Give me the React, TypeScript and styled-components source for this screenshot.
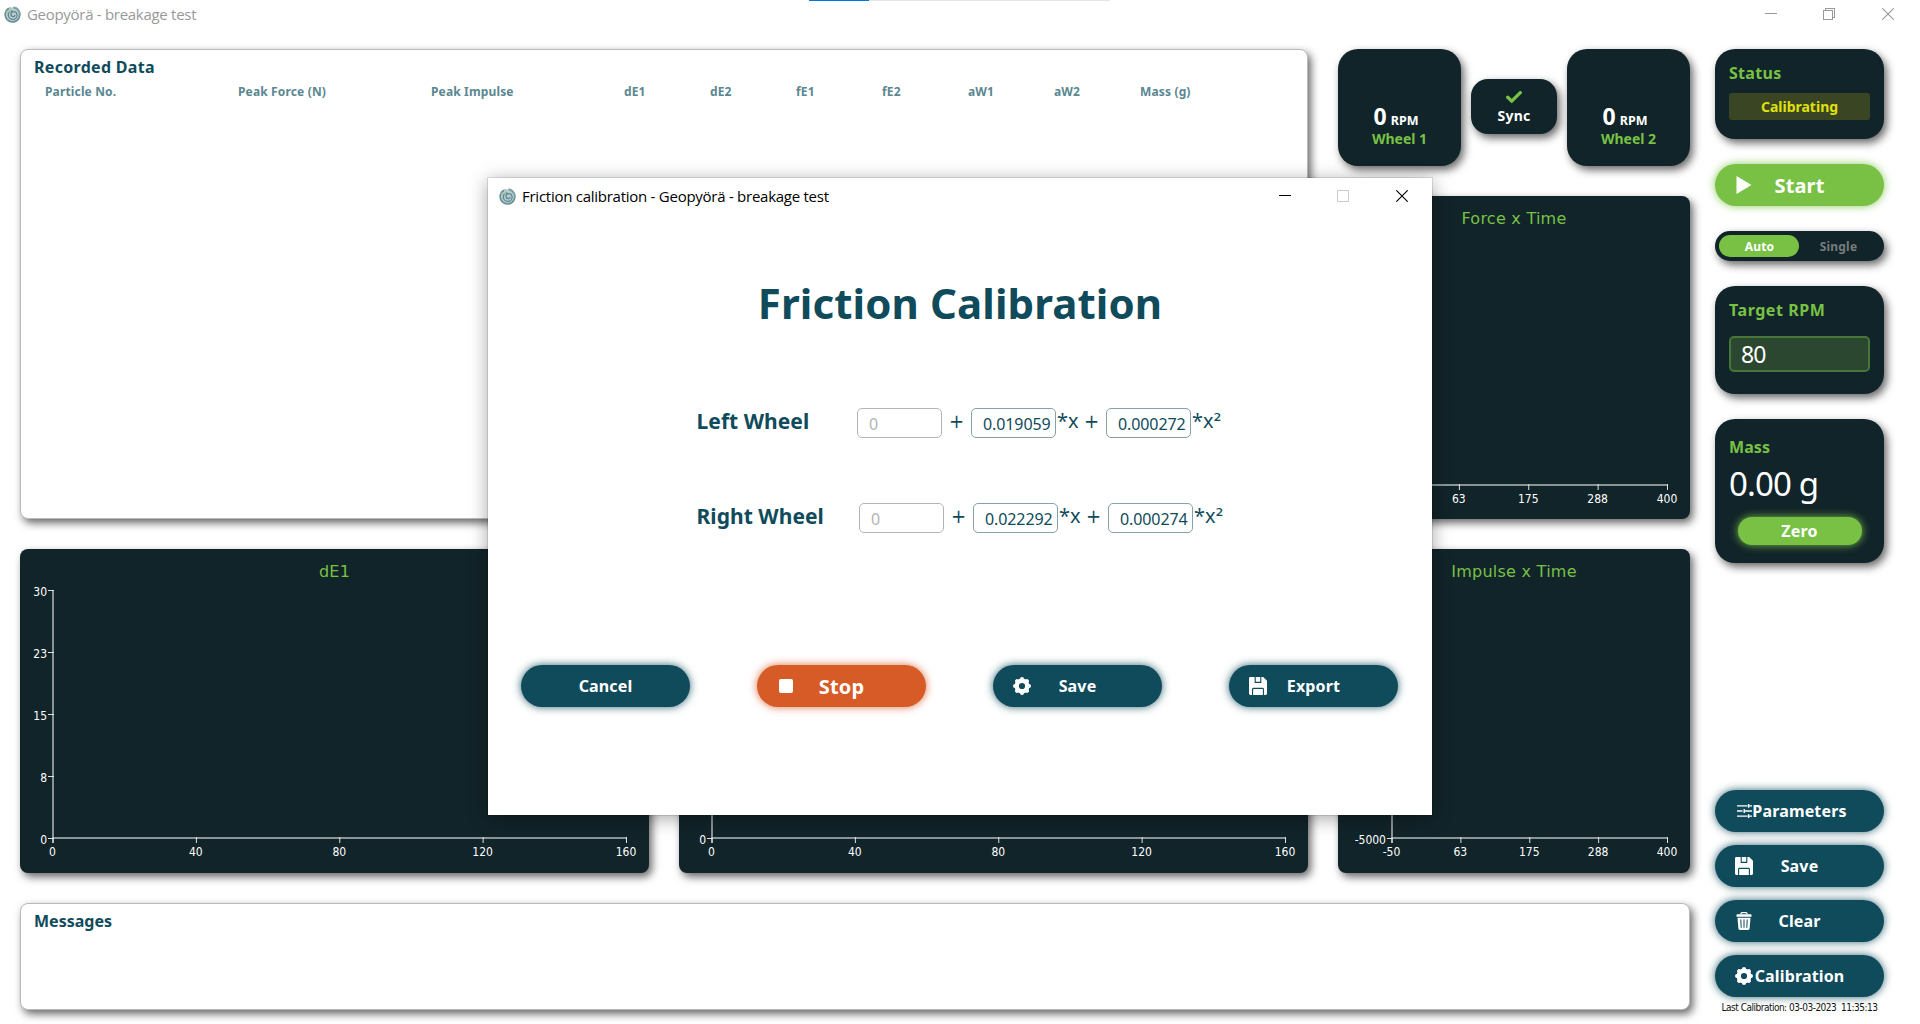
import React from "react";
import styled, { createGlobalStyle, css } from "styled-components";

const c = {
  dark: "#112429",
  teal: "#104b5b",
  green: "#78c144",
  orange: "#d65b26",
  axis: "#8b9396",
};

const uiFont = `"Noto Sans", "Open Sans", sans-serif`;
const titleFont = `"Open Sans", "Noto Sans", sans-serif`;
const chartFont = `"DejaVu Sans Condensed", "DejaVu Sans", sans-serif`;

const GlobalStyle = createGlobalStyle`
  *, *::before, *::after { box-sizing: border-box; }
  body { margin: 0; background: #fff; font-family: ${uiFont}; overflow: hidden; }
  button { font: inherit; border: 0; padding: 0; margin: 0; }
  svg { display: block; }
`;

/* ---------- window frame ---------- */

const Window = styled.div`
  position: relative;
  width: 1920px;
  height: 1024px;
  display: flex;
  flex-direction: column;
  background: #fff;
`;

const Progress = styled.div`
  position: absolute;
  top: 0;
  left: 809px;
  width: 301px;
  height: 1px;
  background: linear-gradient(to right, #0078d7 60px, #e5e5e5 60px);
`;

const TitleBar = styled.header<{ $dialog?: boolean }>`
  flex: none;
  display: flex;
  align-items: center;
  height: ${(p) => (p.$dialog ? 36 : 28)}px;
  padding: ${(p) => (p.$dialog ? "0 24px 0 11px" : "0 26px 0 4px")};
  color: ${(p) => (p.$dialog ? "#000" : "#999")};
  font-family: ${titleFont};
  font-size: 15px;
  line-height: 20px;
  letter-spacing: ${(p) => (p.$dialog ? -0.26 : -0.29)}px;
`;

const TitleText = styled.span`
  flex: 1;
  margin-left: 6px;
  padding-bottom: 1px;
`;

const Controls = styled.div`
  display: flex;
  gap: 46px;
`;

/* ---------- main layout ---------- */

const Body = styled.main`
  display: flex;
  gap: 25px;
  padding: 21px 36px 0 20px;
`;

const Workspace = styled.div`
  width: 1670px;
  display: flex;
  flex-direction: column;
  gap: 30px;
`;

const TopRow = styled.div`
  display: grid;
  grid-template-columns: 1288px 352px;
  column-gap: 30px;
  height: 470px;
`;

const RightStack = styled.div`
  display: flex;
  flex-direction: column;
  gap: 30px;
`;

const ChartRow = styled.div`
  display: grid;
  grid-template-columns: 629px 629px 352px;
  column-gap: 30px;
  height: 324px;
`;

const softShadow = css`
  box-shadow: 3px 4px 9px rgba(0, 0, 0, 0.6);
`;

const LightPanel = styled.section<{ $height: number }>`
  height: ${(p) => p.$height}px;
  padding: 7px 13px;
  border: 1px solid #b9bbbb;
  border-radius: 8px;
  background: #fff;
  ${softShadow}
`;

const PanelTitle = styled.h2<{ $spacing?: number }>`
  margin: 0;
  color: ${c.teal};
  font-size: 16px;
  line-height: 20px;
  letter-spacing: ${(p) => p.$spacing ?? 0}px;
`;

const HeaderRow = styled.div`
  display: grid;
  grid-template-columns: repeat(3, 193px) repeat(6, 86px) 1fr;
  margin-top: 7px;
  padding-left: 11px;
  color: #5a8790;
  font-size: 12px;
  font-weight: 700;
  line-height: 16px;
  letter-spacing: 0.15px;
`;

/* ---------- wheels ---------- */

const Wheels = styled.div`
  display: flex;
  gap: 10px;
  align-items: flex-start;
`;

const WheelCard = styled.div`
  width: 123px;
  height: 117px;
  padding-top: 53px;
  border-radius: 20px;
  background: ${c.dark};
  text-align: center;
  ${softShadow}
`;

const WheelReading = styled.div`
  display: flex;
  align-items: baseline;
  justify-content: center;
  gap: 4px;
  height: 27px;
  padding-right: 7px;
  color: #fff;
  font-size: 23px;
  font-weight: 700;
  line-height: 28px;
`;

const Unit = styled.span`
  font-size: 12.5px;
  line-height: 14px;
`;

const WheelName = styled.div`
  color: ${c.green};
  font-size: 14px;
  font-weight: 700;
  line-height: 20px;
`;

const SyncCard = styled.div`
  display: flex;
  flex-direction: column;
  align-items: center;
  width: 86px;
  height: 55px;
  margin-top: 30px;
  padding-top: 12px;
  border-radius: 17px;
  background: ${c.dark};
  color: #fff;
  font-size: 14px;
  font-weight: 700;
  line-height: 20px;
  letter-spacing: 0.3px;
  ${softShadow}
`;

const SyncLabel = styled.span`
  margin-top: 3px;
`;

/* ---------- charts ---------- */

const ChartCard = styled.section`
  display: flex;
  flex-direction: column;
  flex: 1;
  padding-top: 13px;
  border-radius: 8px;
  background: ${c.dark};
  ${softShadow}
`;

const ChartTitle = styled.h3`
  height: 19px;
  margin: 0;
  color: ${c.green};
  font-family: "DejaVu Sans", sans-serif;
  font-size: 16px;
  font-weight: 400;
  line-height: 20px;
  letter-spacing: 0.25px;
  text-align: center;
`;

const Plot = styled.svg`
  flex: 1;
  width: 100%;
  overflow: visible;
  font-family: ${chartFont};
  font-size: 12px;
  fill: #fff;
`;

/* ---------- side bar ---------- */

const Side = styled.aside`
  width: 169px;
  display: flex;
  flex-direction: column;
  gap: 25px;
`;

const SideCard = styled.section<{ $height: number; $top: number }>`
  display: flex;
  flex-direction: column;
  height: ${(p) => p.$height}px;
  padding: ${(p) => p.$top}px 14px 0;
  border-radius: 20px;
  background: ${c.dark};
  ${softShadow}
`;

const CardTitle = styled.h2<{ $spacing?: number }>`
  margin: 0;
  color: ${c.green};
  font-size: 16px;
  line-height: 20px;
  letter-spacing: ${(p) => p.$spacing ?? 0.1}px;
`;

const StatusBadge = styled.div`
  margin-top: 10px;
  border-radius: 3px;
  background: #3a4523;
  color: #e0e00c;
  font-size: 14px;
  font-weight: 700;
  line-height: 27px;
  text-align: center;
`;

const Toggle = styled.div`
  display: flex;
  height: 30px;
  padding: 4px;
  border-radius: 15px;
  background: ${c.dark};
  ${softShadow}
`;

const ToggleOption = styled.button<{ $on?: boolean }>`
  flex: 1;
  padding: ${(p) => (p.$on ? "1px 0 0 1px" : "1px 2px 0 0")};
  border-radius: 11px;
  background: ${(p) => (p.$on ? c.green : "transparent")};
  color: ${(p) => (p.$on ? "#fff" : "#777c7e")};
  font-size: 12px;
  font-weight: 700;
  line-height: 21px;
  letter-spacing: 0.2px;
`;

const TargetField = styled.div`
  height: 36px;
  margin-top: 16px;
  padding-left: 10px;
  border: 2px solid #47763a;
  border-radius: 5px;
  background: #2b472f;
  color: #fff;
  font-size: 23px;
  line-height: 33px;
  letter-spacing: -1px;
`;

const MassValue = styled.div`
  margin-top: 7px;
  color: #fff;
  font-size: 33px;
  line-height: 40px;
  letter-spacing: -0.85px;
  white-space: nowrap;
`;

const ZeroButton = styled.button`
  align-self: center;
  width: 124px;
  height: 28px;
  margin-top: 13px;
  border-radius: 14px;
  background: ${c.green};
  box-shadow: 0 0 9px ${c.green};
  color: #fff;
  font-size: 16px;
  font-weight: 700;
  line-height: 28px;
  letter-spacing: 0.2px;
`;

const PillRoot = styled.button<{ $color: string; $size?: number }>`
  display: grid;
  flex: none;
  align-items: center;
  justify-items: center;
  width: 169px;
  height: 42px;
  border-radius: 21px;
  background: ${(p) => p.$color};
  box-shadow: 0 0 8px ${(p) => p.$color}d9;
  color: #fff;
  font-size: ${(p) => p.$size ?? 16}px;
  font-weight: 700;
  line-height: 24px;
  letter-spacing: 0.15px;
  & > * { grid-area: 1 / 1; }
`;

const PillLabel = styled.span<{ $drop: number }>`
  padding-top: ${(p) => p.$drop}px;
`;

const PillIcon = styled.span`
  display: grid;
  place-items: center;
  justify-self: start;
  width: 18px;
  height: 18px;
  margin-left: 20px;
`;

const Actions = styled.div`
  display: flex;
  flex-direction: column;
  gap: 13px;
  margin-top: 202px;
`;

const LastCalibration = styled.div`
  margin-top: -10px;
  height: 16px;
  color: #111;
  font-family: ${chartFont};
  font-size: 10px;
  line-height: 16px;
  letter-spacing: -0.5px;
  text-align: center;
  white-space: pre;
`;

/* ---------- calibration dialog ---------- */

const Dialog = styled.section`
  position: absolute;
  left: 488px;
  top: 178px;
  width: 944px;
  height: 637px;
  display: flex;
  flex-direction: column;
  background: #fff;
  box-shadow: 0 0 0 1px rgba(0, 0, 0, 0.1), 0 3px 18px rgba(0, 0, 0, 0.36);
`;

const DialogTitle = styled.h1`
  margin: 61px 0 77px;
  color: ${c.teal};
  font-size: 42px;
  line-height: 56px;
  letter-spacing: 0.1px;
  text-align: center;
`;

const Equations = styled.div`
  display: flex;
  flex-direction: column;
  gap: 65px;
  padding-left: 208.5px;
`;

const EquationRow = styled.div<{ $label: number }>`
  display: grid;
  grid-template-columns: ${(p) => p.$label}px 85px 29px 85px 50px 85px auto;
  height: 30px;
  color: ${c.teal};
  font-size: 20px;
  line-height: 26px;
`;

const WheelLabel = styled.label`
  font-size: 21px;
  font-weight: 700;
  line-height: 27px;
  letter-spacing: 0.05px;
`;

const Coefficient = styled.div<{ $muted?: boolean }>`
  height: 30px;
  padding: 1px 0 0 11px;
  border: 1px solid ${(p) => (p.$muted ? "#b4b4b4" : "#86a3ab")};
  border-radius: 5px;
  color: ${(p) => (p.$muted ? "#b4b4b4" : c.teal)};
  font-size: 16px;
  line-height: 28px;
  letter-spacing: -0.1px;
`;

const Operator = styled.span`
  font-family: ${chartFont};
  text-align: center;
`;

const Term = styled.span`
  display: flex;
  justify-content: space-between;
  padding: 0 7px 0 1px;
`;

const Power = styled.span`
  font-family: "DejaVu Sans", sans-serif;
  line-height: 1;
`;

const DialogActions = styled.div`
  display: flex;
  gap: 67px;
  margin-top: 132px;
  padding-left: 33px;
`;

/* ---------- icons ---------- */

const Logo = () => (
  <svg width="17" height="17" viewBox="0 0 17 17" fill="none">
    <circle cx="8.7" cy="8.8" r="7.4" fill="#b9cdd0" />
    <path d="M5 2.2A7.3 7.3 0 1 0 9.5 1.4" stroke="#6b919b" strokeWidth="1.7" />
    <path d="M9.5 1.2a7.5 7.5 0 0 1 6.6 7.4" stroke="#88a6a9" strokeWidth="1.2" />
    <path d="M8.4 4.6a4.4 4.4 0 1 0 4.7 4.6c0-2.5-1.5-3.6-3.3-3.6-1.7 0-2.8 1.2-2.8 2.7s1 2.4 2.2 2.4 1.900-.8 1.900-1.700" stroke="#5d8792" strokeWidth="1.25" />
    <path d="M5.400 1.300l1.900 1.200M2.300 5.200l1.700 1.500M5.500 5.800l1.400-1.500" stroke="#a5c98e" strokeWidth="1.500" />
  </svg>
);

const Minimize = () => (
  <svg width="12" height="12" fill="none" stroke="currentColor" shapeRendering="crispEdges">
    <path d="M0 5.500H12" />
  </svg>
);

const Restore = () => (
  <svg width="13" height="12" fill="none" stroke="currentColor" shapeRendering="crispEdges">
    <path d="M.5 2.500h9v9h-9zM2.500 2.500v-2h9v9h-2" />
  </svg>
);

const Maximize = () => (
  <svg width="13" height="12" fill="none" stroke="#ccc" shapeRendering="crispEdges">
    <path d="M.5.5h11v11H.5z" />
  </svg>
);

const Close = () => (
  <svg width="12" height="12" fill="none" stroke="currentColor" strokeWidth="1.1">
    <path d="M.3.3l11.400 11.400M11.700.3L.3 11.700" />
  </svg>
);

const Check = () => (
  <svg width="16" height="12" viewBox="0 0 16 12" fill="none">
    <path d="M1.700 6.200l4 3.900 8.600-8.500" stroke={c.green} strokeWidth="3.300" strokeLinecap="round" />
  </svg>
);

const Play = () => (
  <svg width="18" height="18" fill="#fff">
    <path d="M1.500 0L16.500 9 1.500 18z" />
  </svg>
);

const StopSquare = () => (
  <svg width="14" height="14" fill="#fff">
    <rect width="14" height="14" rx="2" />
  </svg>
);

// Eight short rounded teeth around a thick ring.
const Gear = () => (
  <svg width="18" height="18" viewBox="0 0 18 18" fill="none" stroke="#fff">
    <circle cx="9" cy="9" r="5.300" strokeWidth="4.400" />
    {[0, 45, 90, 135].map((angle) => (
      <g key={angle} transform={`rotate(${angle} 9 9)`} strokeWidth="4" strokeLinecap="round">
        <path d="M9 2v.6M9 15.400v.6" />
      </g>
    ))}
  </svg>
);

const Floppy = () => (
  <svg width="18" height="18" viewBox="0 0 18 18">
    <path d="M1.400 0h12.800L18 3.800v12.800c0 .8-.6 1.400-1.400 1.400H1.400C.6 18 0 17.400 0 16.600V1.400C0 .6.6 0 1.400 0z" fill="#fff" />
    <path d="M6.200 0v5.400h5.600V0" fill="none" stroke={c.teal} strokeWidth="1.100" />
    <path d="M3.600 18v-5.800c0-.5.300-.8.800-.8h9.200c.5 0 .8.300.8.800V18" fill="none" stroke={c.teal} strokeWidth="1.100" />
  </svg>
);

const Trash = () => (
  <svg width="16" height="18" viewBox="0 0 16 18">
    <path d="M5 2.500V1.600c0-.5.400-.9.900-.9h4.200c.5 0 .9.400.9.900v.9" fill="none" stroke="#fff" strokeWidth="1.300" />
    <path d="M1.300 2.200h13.400c.6 0 .8.400.8.800v1.700H.5V3c0-.5.300-.8.800-.8z" fill="#fff" />
    <path d="M1.500 5.700h13l-.9 10.900c-.1.900-.7 1.400-1.500 1.400H3.900c-.8 0-1.400-.5-1.500-1.400z" fill="#fff" />
    <path d="M4.800 7.500l.4 8.300M8 7.500v8.300M11.200 7.500l-.4 8.300" stroke={c.teal} strokeWidth="1" />
  </svg>
);

const Tune = () => (
  <svg width="15" height="14" viewBox="0 0 15 14" fill="none" stroke="#fff" strokeWidth="1.400">
    <path d="M0 1.900h10.500M12 1.900h3M11.600 0v3.800M0 7h5.500M7 7H15M7.200 5.100v3.800M0 12.100h10.500M12 12.100h3M11.600 10.200V14" />
  </svg>
);

/* ---------- composed parts ---------- */

type PillProps = { label: string; icon?: React.ReactNode; color?: string; size?: number };

const Pill = ({ label, icon, color = c.teal, size }: PillProps) => (
  <PillRoot $color={color} $size={size}>
    {icon && <PillIcon>{icon}</PillIcon>}
    <PillLabel $drop={size ? 2 : 0}>{label}</PillLabel>
  </PillRoot>
);

type ChartProps = {
  title?: string;
  origin: number;
  end: number;
  xLabels: string[];
  yLabels?: string[];
};

// Plot coordinates start below the 32px title strip.
const AXIS_TOP = 9.5;
const AXIS_BOTTOM = 257;

const Chart = ({ title, origin, end, xLabels, yLabels = [] }: ChartProps) => {
  const xStep = (end - origin) / 4;
  const yStep = (AXIS_BOTTOM + 0.5 - AXIS_TOP) / 4;
  return (
    <ChartCard>
      <ChartTitle>{title}</ChartTitle>
      <Plot>
        <g stroke={c.axis} strokeWidth="2" shapeRendering="crispEdges">
          <path d={`M${origin} ${AXIS_TOP - 0.5}V${AXIS_BOTTOM + 5}`} />
          <path d={`M${origin} ${AXIS_BOTTOM}H${end}`} />
        </g>
        {xLabels.map((label, i) => {
          const x = origin + xStep * (i + 5 - xLabels.length);
          return (
            <g key={label}>
              <path d={`M${x} ${AXIS_BOTTOM - 1}v6`} stroke="#dfe2e3" />
              <text x={x - 0.5} y={AXIS_BOTTOM + 18} textAnchor="middle">{label}</text>
            </g>
          );
        })}
        {yLabels.map((label, i) => {
          const y = AXIS_BOTTOM + 0.5 - yStep * i;
          return (
            <g key={label}>
              <path d={`M${origin - 5} ${y}h6`} stroke="#dfe2e3" />
              <text x={origin - 6} y={y + 5.5} textAnchor="end">{label}</text>
            </g>
          );
        })}
      </Plot>
    </ChartCard>
  );
};

const Wheel = ({ name }: { name: string }) => (
  <WheelCard>
    <WheelReading>
      0<Unit>RPM</Unit>
    </WheelReading>
    <WheelName>{name}</WheelName>
  </WheelCard>
);

const Equation = ({ name, width, b, a }: { name: string; width: number; b: string; a: string }) => (
  <EquationRow $label={width}>
    <WheelLabel>{name}</WheelLabel>
    <Coefficient $muted>0</Coefficient>
    <Operator>+</Operator>
    <Coefficient>{b}</Coefficient>
    <Term>
      <span>*x</span>
      <Operator>+</Operator>
    </Term>
    <Coefficient>{a}</Coefficient>
    <Term>
      <span>*x<Power>²</Power></span>
    </Term>
  </EquationRow>
);

const columns = ["Particle No.", "Peak Force (N)", "Peak Impulse", "dE1", "dE2", "fE1", "fE2", "aW1", "aW2", "Mass (g)"];

export default function App() {
  return (
    <>
      <GlobalStyle />
      <Window>
        <Progress />
        <TitleBar>
          <Logo />
          <TitleText>Geopyörä - breakage test</TitleText>
          <Controls>
            <Minimize />
            <Restore />
            <Close />
          </Controls>
        </TitleBar>

        <Body>
          <Workspace>
            <TopRow>
              <LightPanel $height={470}>
                <PanelTitle $spacing={0.3}>Recorded Data</PanelTitle>
                <HeaderRow>
                  {columns.map((name) => (
                    <span key={name}>{name}</span>
                  ))}
                </HeaderRow>
              </LightPanel>
              <RightStack>
                <Wheels>
                  <Wheel name="Wheel 1" />
                  <SyncCard>
                    <Check />
                    <SyncLabel>Sync</SyncLabel>
                  </SyncCard>
                  <Wheel name="Wheel 2" />
                </Wheels>
                <Chart title="Force x Time" origin={52} end={329.5} xLabels={["63", "175", "288", "400"]} />
              </RightStack>
            </TopRow>

            <ChartRow>
              <Chart
                title="dE1"
                origin={33}
                end={606.5}
                xLabels={["0", "40", "80", "120", "160"]}
                yLabels={["0", "8", "15", "23", "30"]}
              />
              <Chart origin={33} end={606.5} xLabels={["0", "40", "80", "120", "160"]} yLabels={["0"]} />
              <Chart
                title="Impulse x Time"
                origin={54}
                end={329.5}
                xLabels={["-50", "63", "175", "288", "400"]}
                yLabels={["-5000"]}
              />
            </ChartRow>

            <LightPanel $height={107}>
              <PanelTitle>Messages</PanelTitle>
            </LightPanel>
          </Workspace>

          <Side>
            <SideCard $height={90} $top={14}>
              <CardTitle $spacing={0.3}>Status</CardTitle>
              <StatusBadge>Calibrating</StatusBadge>
            </SideCard>
            <Pill label="Start" icon={<Play />} color={c.green} size={20} />
            <Toggle>
              <ToggleOption $on>Auto</ToggleOption>
              <ToggleOption>Single</ToggleOption>
            </Toggle>
            <SideCard $height={108} $top={14}>
              <CardTitle $spacing={0.55}>Target RPM</CardTitle>
              <TargetField>80</TargetField>
            </SideCard>
            <SideCard $height={144} $top={18}>
              <CardTitle>Mass</CardTitle>
              <MassValue>0.00 g</MassValue>
              <ZeroButton>Zero</ZeroButton>
            </SideCard>
            <Actions>
              <Pill label="Parameters" icon={<Tune />} />
              <Pill label="Save" icon={<Floppy />} />
              <Pill label="Clear" icon={<Trash />} />
              <Pill label="Calibration" icon={<Gear />} />
              <LastCalibration>{"Last Calibration: 03-03-2023  11:35:13"}</LastCalibration>
            </Actions>
          </Side>
        </Body>

        <Dialog>
          <TitleBar $dialog>
            <Logo />
            <TitleText>Friction calibration - Geopyörä - breakage test</TitleText>
            <Controls>
              <Minimize />
              <Maximize />
              <Close />
            </Controls>
          </TitleBar>
          <DialogTitle>Friction Calibration</DialogTitle>
          <Equations>
            <Equation name="Left Wheel" width={160.5} b="0.019059" a="0.000272" />
            <Equation name="Right Wheel" width={162.5} b="0.022292" a="0.000274" />
          </Equations>
          <DialogActions>
            <Pill label="Cancel" />
            <Pill label="Stop" icon={<StopSquare />} color={c.orange} size={20} />
            <Pill label="Save" icon={<Gear />} />
            <Pill label="Export" icon={<Floppy />} />
          </DialogActions>
        </Dialog>
      </Window>
    </>
  );
}
